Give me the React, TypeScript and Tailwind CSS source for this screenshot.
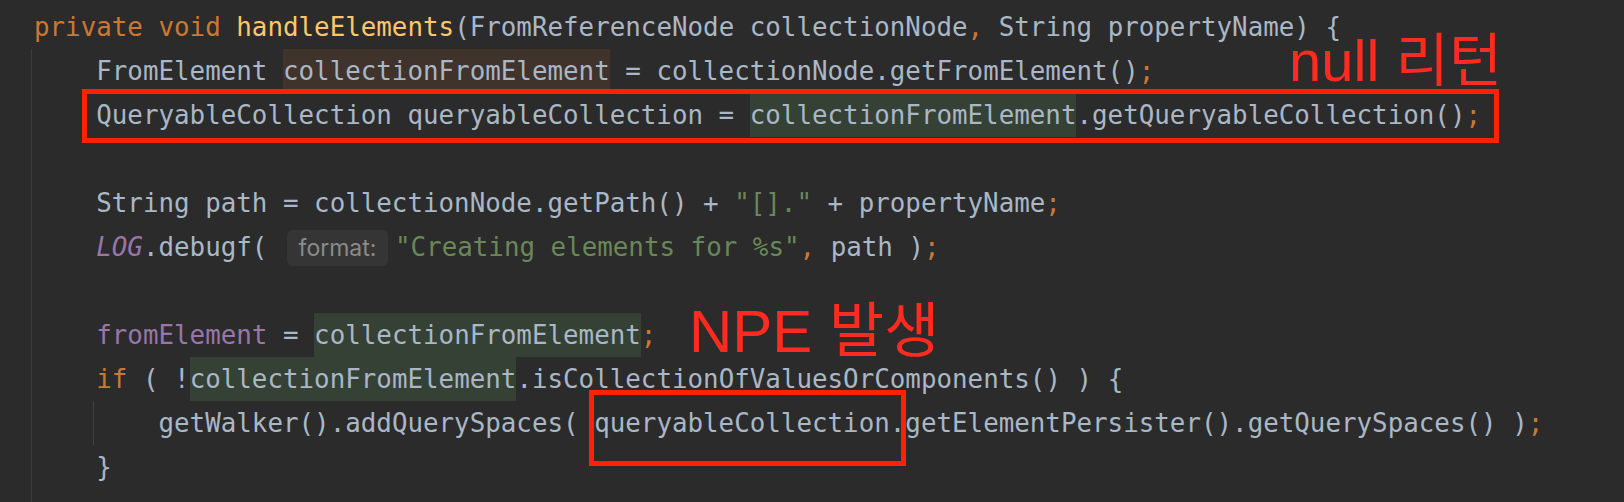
import React from "react";

const K = ({ children }: { children: React.ReactNode }) => (
  <span className="text-[#cc7832]">{children}</span>
);
const G = ({ children }: { children: React.ReactNode }) => (
  <span className="text-[#6a8759]">{children}</span>
);
const ReadHl = ({ children }: { children: React.ReactNode }) => (
  <span className="inline-block h-[44px] align-top bg-[#344134]">{children}</span>
);
const WriteHl = ({ children }: { children: React.ReactNode }) => (
  <span className="inline-block h-[44px] align-top bg-[#40332b]">{children}</span>
);
const Line = ({ children }: { children?: React.ReactNode }) => (
  <div className="h-[44px] leading-[44px] whitespace-pre">{children}</div>
);

export default function App() {
  return (
    <div className="relative w-[1624px] h-[502px] overflow-hidden bg-[#2b2b2b] text-[#a9b7c6] font-['DejaVu_Sans_Mono',monospace] text-[25.85px] pt-[5px] pl-[34px]">
      <Line>
        <K>private void </K>
        <span className="text-[#ffc66d]">handleElements</span>(FromReferenceNode collectionNode<K>,</K> String propertyName) {"{"}
      </Line>
      <div className="-ml-[3px] pl-[2px] border-l border-[#3b3b3b] h-[460px]">
        <Line>
          {"    FromElement "}
          <WriteHl>collectionFromElement</WriteHl>
          {" = collectionNode.getFromElement()"}
          <K>;</K>
        </Line>
        <Line>
          {"    QueryableCollection queryableCollection = "}
          <ReadHl>collectionFromElement</ReadHl>
          {".getQueryableCollection()"}
          <K>;</K>
        </Line>
        <Line />
        <Line>
          {"    String path = collectionNode.getPath() + "}
          <G>"[]."</G>
          {" + propertyName"}
          <K>;</K>
        </Line>
        <Line>
          {"    "}
          <span className="italic text-[#9876aa]">LOG</span>
          {".debugf( "}
          <span className="inline-block align-top mt-[5px] ml-[4px] mr-[7px] w-[101px] h-[36px] rounded-[6px] bg-[#353535] text-center leading-[36px] text-[23px] text-[#8b8b8b] font-['Inter',sans-serif]">
            format:
          </span>
          <G>"Creating elements for %s"</G>
          <K>,</K>
          {" path )"}
          <K>;</K>
        </Line>
        <Line />
        <Line>
          {"    "}
          <span className="text-[#9876aa]">fromElement</span>
          {" = "}
          <ReadHl>collectionFromElement</ReadHl>
          <K>;</K>
        </Line>
        <Line>
          {"    "}
          <K>if</K>
          {" ( !"}
          <ReadHl>collectionFromElement</ReadHl>
          {".isCollectionOfValuesOrComponents() ) {"}
        </Line>
        <Line>
          {"    "}
          <span className="inline-block h-[44px] align-top -ml-[3px] pl-[2px] border-l border-[#414141]">
            {"    getWalker().addQuerySpaces( queryableCollection.getElementPersister().getQuerySpaces() )"}
            <K>;</K>
          </span>
        </Line>
        <Line>{"    }"}</Line>
      </div>

      {/* annotation boxes */}
      <div className="absolute left-[82px] top-[89px] w-[1417px] h-[54px] border-[5px] border-[#ff2200]" />
      <div className="absolute left-[589px] top-[390px] w-[317px] h-[76px] border-[5px] border-[#ff2200]" />

      {/* annotation labels */}
      <div className="absolute left-[1289px] top-[32px] text-[58px] leading-none whitespace-pre text-[#ff2b20] font-['Liberation_Sans','Noto_Sans_CJK_KR',sans-serif]">
        null 리턴
      </div>
      <div className="absolute left-[689px] top-[302px] text-[60px] leading-none whitespace-pre text-[#ff2b20] font-['Liberation_Sans','Noto_Sans_CJK_KR',sans-serif]">
        NPE 발생
      </div>
    </div>
  );
}
